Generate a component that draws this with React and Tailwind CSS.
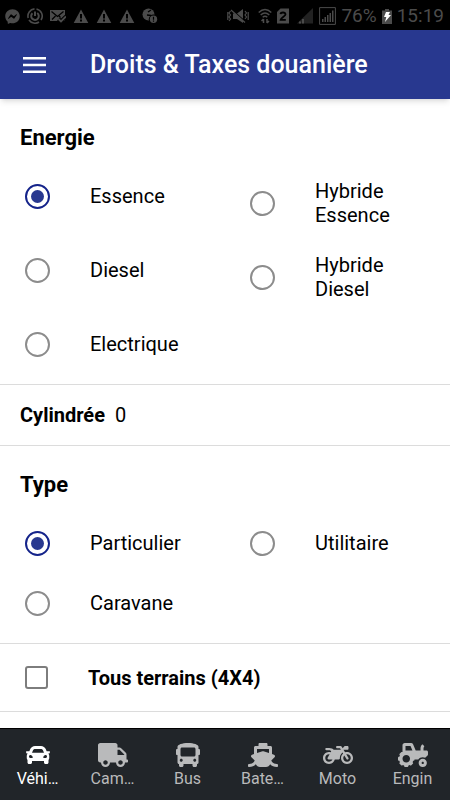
import { useState } from "react";
import { FaBus, FaCar, FaMotorcycle, FaShip, FaTractor, FaTruck, FaFacebookMessenger } from "react-icons/fa";

function Warning() {
  return (
    <svg className="h-4 w-4" viewBox="0 0 16 16" fill="currentColor">
      <path fillRule="evenodd" d="M8 1.5 15.3 15H.7L8 1.5ZM7 6v4.5h2V6H7Zm0 5.5v2h2v-2H7Z" />
    </svg>
  );
}

function StatusBar() {
  return (
    <div className="flex h-[30px] shrink-0 items-center justify-between bg-black pt-[2px] pr-[6px] pl-[5px] text-[#4b4b4b]">
      <div className="flex items-center gap-[7px]">
        <FaFacebookMessenger className="h-[15px] w-[15px]" />
        <svg className="h-4 w-4" viewBox="0 0 16 16" fill="none" stroke="currentColor" strokeWidth="1.6">
          <path d="M9.5 1A7.2 7.2 0 0 1 14 12M12 14A7.200 7.200 0 0 1 2 12M1.200 10A7.200 7.200 0 0 1 7.500 .9" />
          <path d="M10.200 5A3.800 3.800 0 1 1 5.500 5.200M8 3.500V8" strokeWidth="2" />
        </svg>
        <svg className="h-4 w-4" viewBox="0 0 16 16">
          <path d="M0 2h15v11H0z" fill="currentColor" />
          <path d="m1.500 3.500 6 5 6-5M2 11.500 5.500 8M9 8l1.500 1.500" stroke="#000" strokeWidth="1.300" fill="none" />
          <path d="m8.500 11 2.500 2.500 5-5" stroke="#000" strokeWidth="4" fill="none" />
          <path d="m8.500 11 2.500 2.500 5-5" stroke="currentColor" strokeWidth="1.800" fill="none" />
        </svg>
        <Warning />
        <Warning />
        <Warning />
        <svg className="h-4 w-4" viewBox="0 0 16 16">
          <circle cx="6.500" cy="6.500" r="6" fill="currentColor" />
          <path d="m6 4 3-2M5 7l4 .5" stroke="#000" strokeWidth="1.300" />
          <circle cx="11.500" cy="11.200" r="4.700" fill="#000" />
          <circle cx="11.500" cy="11.200" r="3.700" fill="currentColor" />
          <path d="M11.500 8.700v3M11.500 12.500v1.200" stroke="#000" strokeWidth="1.200" />
        </svg>
      </div>
      <div className="flex items-center">
        <svg className="mr-[9px] h-4 w-[22px]" viewBox="0 0 22 16">
          <path d="M6 5.500h4L16 1v14l-6-4H6z" fill="currentColor" />
          <path d="m4 1 14 12.500" stroke="#000" strokeWidth="1.500" />
          <path d="m4 2 14 12.500M3.500 3 2 5l1.500 2L2 9l1.500 2L2 13M.8 4v8M18 3l1.500 2L18 7l1.500 2-1.500 2M21.200 4v8" stroke="currentColor" strokeWidth="1.200" fill="none" />
        </svg>
        <svg className="mr-[5px] h-4 w-[14px]" viewBox="0 0 14 16" fill="none" stroke="currentColor" strokeWidth="1.500">
          <path d="M.7 4.500q6.300-6 12.600 0M2.700 7q4.300-4 8.600 0M4.700 9.300q2.300-2 4.600 0" />
          <path d="M5.500 11v4M3.500 13 5.500 11M9 11v4M11 13 9 15" />
        </svg>
        <svg className="mr-[8px] h-4 w-[12px]" viewBox="0 0 12 16">
          <path d="M3.500.5H12V15.500H0V4z" fill="currentColor" />
          <path d="M3.500 6.200q.2-1.700 2.500-1.700t2.500 2c0 1.500-4.500 3-4.900 5.300h5.200" stroke="#000" strokeWidth="1.800" fill="none" />
        </svg>
        <svg className="mr-[6px] h-4 w-[16px]" viewBox="0 0 16 16">
          <path d="M16 0v15.500H0z" fill="#222" />
          <path d="M2 13.500h2v2H2zM5 11h2v4.500H5z" fill="currentColor" />
        </svg>
        <svg className="mr-[5px] h-[18px] w-[17px]" viewBox="0 0 17 18">
          <path d="M.6.600h15.800v16.800H.6z" stroke="currentColor" fill="none" />
          <path d="M3 12h1.500v3H3zM5.500 10H7v5H5.500zM8 8h1.500v7H8zM10.500 6H12v9h-1.500zM13 3.500h1.500V15H13z" fill="currentColor" />
        </svg>
        <span className="text-[19px]/[24px]">76%</span>
        <svg className="mx-[5px] h-[15px] w-[10px]" viewBox="0 0 10 15">
          <path d="M3 0h4v1.500h3V15H0V1.500h3z" fill="currentColor" />
          <path d="M4 3h4L6.500 6H9l-6 7 1.300-5H2z" fill="#fff" />
        </svg>
        <span className="text-[19px]/[24px]">15:19</span>
      </div>
    </div>
  );
}

function RadioOption({ name, label, checked, onChange }) {
  return (
    <label className="flex min-h-[60px] items-center py-[13px] pr-5 pl-[25px]">
      <input
        type="radio"
        name={name}
        checked={checked}
        onChange={onChange}
        className="grid h-[25px] w-[25px] shrink-0 appearance-none place-items-center rounded-full border-2 border-[#8c8c8c] checked:border-[#14238a] checked:before:h-[13px] checked:before:w-[13px] checked:before:rounded-full checked:before:bg-[#28388f] checked:before:content-['']"
      />
      <span className="ml-[40px] flex-1 text-[20px]/[24px]">{label}</span>
    </label>
  );
}

function RadioSection({ title, name, options }) {
  const [value, setValue] = useState(options[0]);
  return (
    <fieldset className="border-b border-[#dcdcdc] py-[10px]">
      <legend className="float-left flex h-[57px] w-full items-center px-5 text-[22px] font-bold">{title}</legend>
      <div className="clear-both grid grid-cols-2 items-start">
        {options.map((option) => (
          <RadioOption
            key={option}
            name={name}
            label={option}
            checked={value === option}
            onChange={() => setValue(option)}
          />
        ))}
      </div>
    </fieldset>
  );
}

const tabs = [
  { name: "Véhicule", label: "Véhi…", Icon: FaCar },
  { name: "Camion", label: "Cam…", Icon: FaTruck },
  { name: "Bus", label: "Bus", Icon: FaBus },
  { name: "Bateau", label: "Bate…", Icon: FaShip },
  { name: "Moto", label: "Moto", Icon: FaMotorcycle },
  { name: "Engin", label: "Engin", Icon: FaTractor },
];

export default function App() {
  const [tab, setTab] = useState("Véhicule");
  return (
    <div className="flex h-screen flex-col overflow-hidden bg-white font-[Roboto,sans-serif] text-black">
      <StatusBar />
      <header className="z-10 flex h-[69px] shrink-0 items-center bg-[#28388f] pl-[23px] text-white shadow-md">
        <button type="button" aria-label="Menu" className="flex h-6 w-6 items-center">
          <svg className="h-4 w-6" viewBox="0 0 24 16" fill="currentColor">
            <path d="M0 0h23v2.500H0zM0 6.700h23v2.500H0zM0 13.400h23v2.500H0z" />
          </svg>
        </button>
        <h1 className="ml-[43px] text-[25px]/[30px] font-medium">Droits &amp; Taxes douanière</h1>
      </header>
      <main className="min-h-0 flex-1 overflow-hidden">
        <RadioSection
          title="Energie"
          name="energie"
          options={["Essence", "Hybride Essence", "Diesel", "Hybride Diesel", "Electrique"]}
        />
        <label className="flex h-[61px] items-center border-b border-[#dcdcdc] px-5 text-[20px]">
          <span className="font-bold">Cylindrée</span>
          <input type="text" inputMode="numeric" defaultValue="0" className="ml-[10px] min-w-0 flex-1 outline-none" />
        </label>
        <RadioSection title="Type" name="type" options={["Particulier", "Utilitaire", "Caravane"]} />
        <label className="flex h-[68px] items-center border-b border-[#dcdcdc] pl-[25px] text-[20px]">
          <input
            type="checkbox"
            className="h-[23px] w-[23px] appearance-none rounded-[3px] border-2 border-[#7d7d7d] checked:bg-[#28388f]"
          />
          <span className="ml-[40px] font-bold">Tous terrains (4X4)</span>
        </label>
      </main>
      <nav className="grid h-[72px] shrink-0 grid-cols-6 border-t border-black bg-[#212529]">
        {tabs.map(({ name, label, Icon }) => (
          <button
            key={name}
            type="button"
            aria-label={name}
            onClick={() => setTab(name)}
            className={`flex flex-col items-center pt-[14px] ${tab === name ? "text-white" : "text-[#b9babb]"}`}
          >
            <Icon className="h-[24px] w-[30px]" />
            <span className="text-[16px]/[24px]">{label}</span>
          </button>
        ))}
      </nav>
    </div>
  );
}
